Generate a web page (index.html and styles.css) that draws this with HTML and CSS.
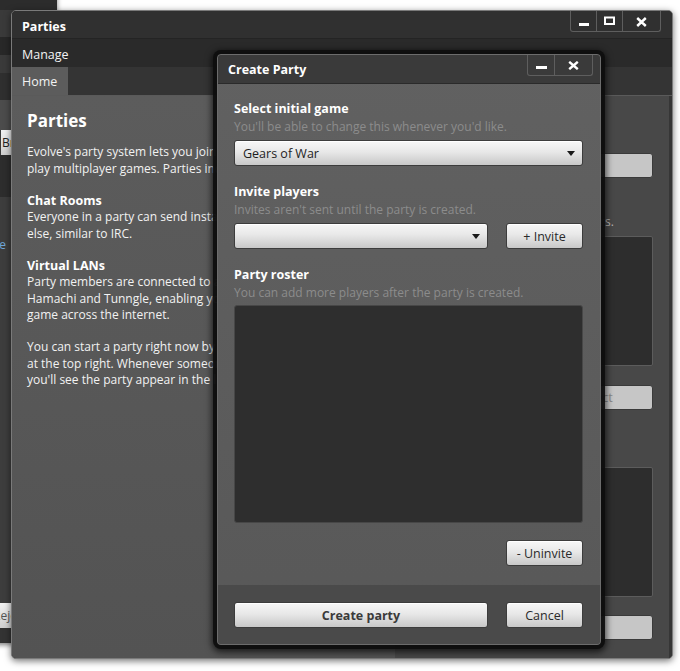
FILE: index.html
```html
<!DOCTYPE html>
<html>
<head>
<meta charset="utf-8">
<title>Parties</title>
<link rel="stylesheet" href="styles.css">
</head>
<body>
<div class="desktop">

  <div class="bgwin">
    <div class="bg-a"></div>
    <div class="bg-b"></div>
    <div class="bg-c"></div>
    <div class="bg-d"></div>
    <div class="bg-e"></div>
    <div class="bg-f"></div>
    <div class="bg-btn">Browse</div>
    <div class="bg-g"></div>
    <div class="bg-body">
      <div class="bg-link">Remove</div>
    </div>
    <div class="bg-btn bg-btn2">Reject</div>
    <div class="bg-h"></div>
  </div>

  <div class="win">
    <div class="titlebar">
      <span class="title">Parties</span>
      <div class="ctrls">
        <span class="cb cb-min"><svg width="10" height="3" viewBox="0 0 10 3"><rect width="10" height="3" fill="#fff"/></svg></span>
        <span class="cb cb-max"><svg width="11" height="9" viewBox="0 0 11 9"><rect x="1" y="1.5" width="9" height="6.5" fill="none" stroke="#fff" stroke-width="2"/></svg></span>
        <span class="cb cb-close"><svg width="11" height="10" viewBox="0 0 11 10"><path d="M1.2 1 L9.8 9 M9.8 1 L1.2 9" stroke="#fff" stroke-width="2.4"/></svg></span>
      </div>
    </div>
    <div class="menubar"><span class="menu-item">Manage</span></div>
    <div class="tabs"><div class="tab active">Home</div></div>
    <div class="content">
      <div class="lpane">
        <h1 class="lp-h">Parties</h1>
        <p class="lp-p">Evolve's party system lets you join up with your friends to<br>play multiplayer games. Parties include the following features:</p>
        <p class="lp-p"><b>Chat Rooms</b><br>Everyone in a party can send instant messages to everyone<br>else, similar to IRC.</p>
        <p class="lp-p"><b>Virtual LANs</b><br>Party members are connected to a virtual LAN, similar to<br>Hamachi and Tunngle, enabling you to play any LAN-enabled<br>game across the internet.</p>
        <p class="lp-p">You can start a party right now by clicking the Create Party button<br>at the top right. Whenever someone invites you to a party,<br>you'll see the party appear in the list on the left.</p>
      </div>
      <div class="rpane">
        <div class="r-lbl">Party</div>
        <div class="r-sub">No party selected.</div>
        <div class="r-btn">Leave party</div>
        <div class="r-lbl r-mt">Members</div>
        <div class="r-sub">Choose a party to view its members.</div>
        <div class="r-box"></div>
        <div class="r-row">
          <div class="r-btn r-grow">Invite</div>
          <div class="r-btn r-small">Eject</div>
        </div>
        <div class="r-lbl r-mt2">Chat</div>
        <div class="r-sub">Messages</div>
        <div class="r-box r-box2"></div>
        <div class="r-btn r-btn3">Send</div>
      </div>
    </div>
  </div>

  <div class="dialog">
    <div class="dtitle">
      <span class="dtitle-text">Create Party</span>
      <div class="dctrls">
        <span class="cb dcb-min"><svg width="11" height="3" viewBox="0 0 11 3"><rect width="11" height="3" fill="#fff"/></svg></span>
        <span class="cb dcb-close"><svg width="11" height="9" viewBox="0 0 11 9"><path d="M1.2 0.8 L9.8 8.2 M9.8 0.8 L1.2 8.2" stroke="#fff" stroke-width="2.4"/></svg></span>
      </div>
    </div>
    <div class="dbody">
      <div class="lbl">Select initial game</div>
      <div class="sub">You'll be able to change this whenever you'd like.</div>
      <div class="select">
        <span>Gears of War</span>
        <svg class="arrow" width="8" height="5" viewBox="0 0 8 5"><path d="M0 0 H8 L4 5 Z" fill="#1a1a1a"/></svg>
      </div>

      <div class="lbl mt">Invite players</div>
      <div class="sub">Invites aren't sent until the party is created.</div>
      <div class="row">
        <div class="select grow">
          <span></span>
          <svg class="arrow" width="8" height="5" viewBox="0 0 8 5"><path d="M0 0 H8 L4 5 Z" fill="#1a1a1a"/></svg>
        </div>
        <button class="btn side">+ Invite</button>
      </div>

      <div class="lbl mt">Party roster</div>
      <div class="sub">You can add more players after the party is created.</div>
      <div class="roster"></div>
      <div class="row end">
        <button class="btn side">- Uninvite</button>
      </div>
    </div>
    <div class="dfoot">
      <button class="btn grow strong">Create party</button>
      <button class="btn side">Cancel</button>
    </div>
  </div>

</div>
</body>
</html>
```

FILE: styles.css
```css
* { box-sizing: border-box; }
html, body { margin: 0; padding: 0; }
body {
  width: 680px;
  height: 671px;
  background: #ffffff;
  font-family: "Open Sans", "Noto Sans", sans-serif;
  font-size: 12.5px;
  color: #f0f0f0;
  overflow: hidden;
}
.desktop { position: relative; width: 680px; height: 671px; overflow: hidden; background: #fff; }

/* background window on the left */
.bgwin {
  position: absolute;
  left: -60px;
  top: -22px;
  width: 117px;
  height: 665px;
  background: #3b3b3b;
  border-radius: 4px;
  box-shadow: 0 2px 5px rgba(0,0,0,.5);
  display: flex;
  flex-direction: column;
  overflow: hidden;
}
.bg-a { height: 32px; background: #2c2c2c; flex: none; }
.bg-b { height: 27px; background: #3a3a3a; flex: none; }
.bg-c { height: 18px; background: #282828; flex: none; }
.bg-d { height: 18px; background: #3a3a3a; flex: none; }
.bg-e { height: 27px; background: #2f2f2f; flex: none; }
.bg-f { height: 30px; background: #4c4c4c; flex: none; }
.bg-btn {
  height: 25px;
  flex: none;
  margin-left: 61px;
  background: linear-gradient(#f2f2f2, #cfcfcf);
  color: #222;
  font-size: 12px;
  line-height: 25px;
  padding-left: 1px;
}
.bg-g { height: 42px; background: #2d2d2d; flex: none; }
.bg-body { flex: 1; background: #3d3d3d; padding-top: 40px; }
.bg-link { width: 66px; text-align: right; color: #6fa6d8; font-size: 12px; line-height: 16px; }
.bg-btn2 { color: #555; margin-left: 52px; }
.bg-h { height: 15px; background: #333; flex: none; }

/* main window */
.win {
  position: absolute;
  left: 11px;
  top: 10px;
  width: 662px;
  height: 649px;
  border: 1px solid #7a7a7a;
  border-radius: 5px;
  background: #2f2f2f;
  box-shadow: 0 2px 7px rgba(0,0,0,.55);
  display: flex;
  flex-direction: column;
  overflow: hidden;
}
.titlebar {
  height: 28px;
  flex: none;
  display: flex;
  justify-content: space-between;
  align-items: flex-start;
  padding-left: 10px;
  background: #303030;
  border-bottom: 1px solid #242424;
}
.title { font-weight: bold; line-height: 28px; padding-top: 2px; color: #fff; }
.ctrls {
  display: flex;
  height: 21px;
  margin-right: 11px;
  border: 1px solid #5e5e5e;
  border-top: none;
  border-radius: 0 0 3px 3px;
}
.cb { display: flex; align-items: flex-start; justify-content: flex-start; height: 100%; }
.cb-min { width: 26px; border-right: 1px solid #5e5e5e; padding: 12px 0 0 8px; }
.cb-max { width: 26px; border-right: 1px solid #5e5e5e; padding: 5px 0 0 7px; }
.cb-close { width: 37px; padding: 6px 0 0 13px; }

.menubar {
  height: 28px;
  flex: none;
  background: #2a2a2a;
  padding: 3px 0 0 10px;
  line-height: 25px;
}
.menu-item { color: #f2f2f2; }

.tabs {
  height: 29px;
  flex: none;
  background: #343434;
  border-bottom: 1px solid #5a5a5a;
  display: flex;
}
.tab { width: 56px; padding: 2px 0 0 10px; line-height: 26px; color: #f2f2f2; }
.tab.active { background: #5c5c5c; }

.content {
  flex: 1;
  display: flex;
  border-right: 3px solid #363636;
  min-height: 0;
}
.lpane {
  width: 383px;
  flex: none;
  background: linear-gradient(#5c5c5c, #535353);
  padding: 14px 15px;
  white-space: nowrap;
  overflow: hidden;
  font-size: 12px;
}
.lp-h { margin: 0 0 12px; font-size: 17px; line-height: 22px; font-weight: bold; color: #fff; }
.lp-p { margin: 0 0 15.5px; line-height: 16.5px; color: #f2f2f2; }
.lp-p b { font-size: 12.5px; color: #fff; }

.rpane {
  flex: 1;
  background: #484848;
  padding: 16px 16px 0;
  display: flex;
  flex-direction: column;
  font-size: 12px;
  min-width: 0;
}
.r-lbl { line-height: 18px; font-weight: bold; color: #fff; }
.r-sub { line-height: 18px; color: #b5b5b5; white-space: nowrap; }
.r-btn {
  height: 25px;
  margin-top: 5px;
  background: #c6c6c6;
  border: 1px solid #3a3a3a;
  border-radius: 3px;
  color: #8a8a8a;
  font-size: 12.5px;
  display: flex;
  align-items: center;
  justify-content: center;
}
.r-mt { margin-top: 17px; }
.r-box { height: 130px; margin-top: 5px; background: #2d2d2d; border: 1px solid #5c5c5c; border-radius: 2px; }
.r-row { display: flex; gap: 8px; margin-top: 14px; }
.r-grow { flex: 1; }
.r-small { width: 108px; flex: none; }
.r-mt2 { margin-top: 19px; }
.r-box2 { margin-top: 2px; }
.r-btn3 { margin-top: 18px; }

/* dialog */
.dialog {
  position: absolute;
  left: 217px;
  top: 54px;
  width: 384px;
  height: 591px;
  border: 1px solid #6c6c6c;
  border-radius: 4px;
  background: linear-gradient(#616161, #585858);
  box-shadow: 0 0 0 4px rgba(14,14,14,.92), 0 2px 7px 5px rgba(0,0,0,.7);
  display: flex;
  flex-direction: column;
  overflow: hidden;
}
.dtitle {
  height: 29px;
  flex: none;
  background: #3a3a3a;
  border-bottom: 1px solid #2a2a2a;
  display: flex;
  justify-content: space-between;
  align-items: flex-start;
  padding-left: 10px;
}
.dtitle-text { font-weight: bold; line-height: 28px; padding-top: 1px; color: #fff; }
.dctrls {
  display: flex;
  height: 21px;
  margin-right: 7px;
  border: 1px solid #5e5e5e;
  border-top: none;
  border-radius: 0 0 3px 3px;
}
.dcb-min { width: 27px; border-right: 1px solid #5e5e5e; padding: 11px 0 0 8px; }
.dcb-close { width: 37px; padding: 6px 0 0 13px; }

.dbody {
  flex: 1;
  padding: 16px 17px 0 16px;
  display: flex;
  flex-direction: column;
}
.lbl { line-height: 18px; font-weight: bold; color: #fff; }
.lbl.mt { margin-top: 17px; }
.sub { line-height: 18px; font-size: 12px; color: #8c8c8c; white-space: nowrap; }

.select, .btn {
  height: 26px;
  border: 1px solid #3c3c3c;
  border-radius: 3px;
  background: linear-gradient(#f7f7f7, #e8e8e8 45%, #c8c8c8);
  box-shadow: inset 0 1px 0 #ffffff;
  color: #2a2a2a;
  font-family: inherit;
  font-size: 12.5px;
}
.select {
  margin-top: 4px;
  display: flex;
  align-items: center;
  justify-content: space-between;
  padding: 0 7px 0 8px;
  color: #1e1e1e;
}
.arrow { display: block; }
.row { display: flex; gap: 18px; margin-top: 4px; }
.row .select { margin-top: 0; }
.row.end { justify-content: flex-end; margin-top: 17px; }
.grow { flex: 1; }
.btn {
  padding: 0;
  display: flex;
  align-items: center;
  justify-content: center;
  cursor: default;
}
.side { width: 77px; flex: none; }
.btn.strong { font-weight: bold; color: #3a3a3a; }
.roster {
  height: 218px;
  margin-top: 3px;
  background: #2e2e2e;
  border: 1px solid #474747;
  border-radius: 3px;
  flex: none;
}
.dfoot {
  height: 59px;
  flex: none;
  background: #4a4a4a;
  padding: 17px 17px 0 16px;
  display: flex;
  gap: 18px;
}
```
